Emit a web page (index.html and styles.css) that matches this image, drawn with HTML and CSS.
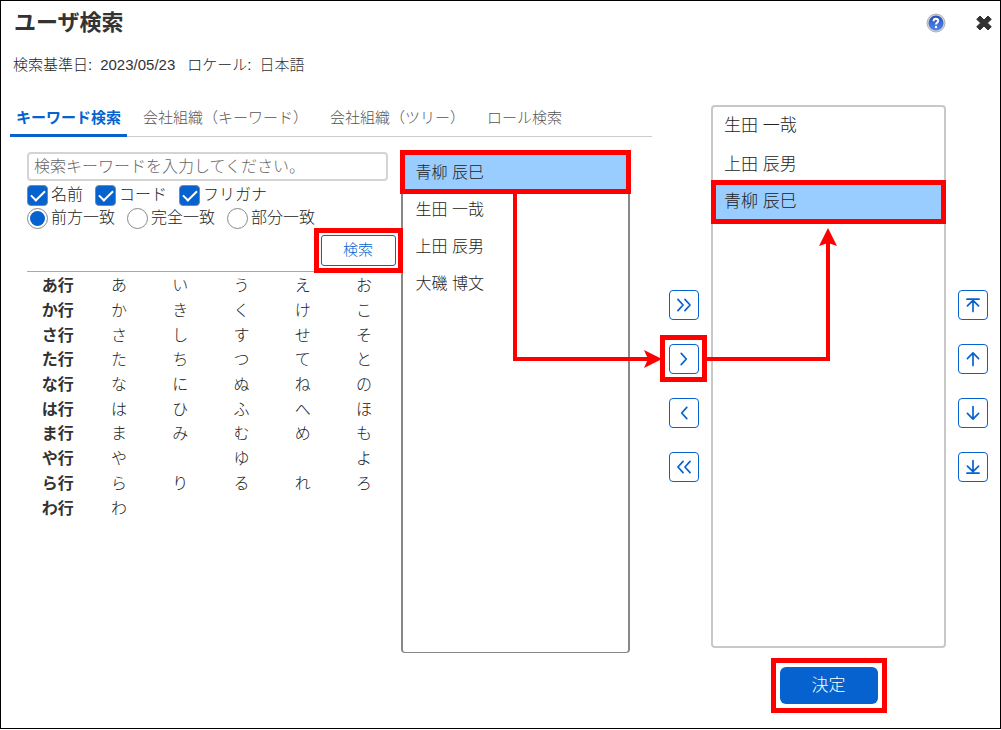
FILE: index.html
```html
<!DOCTYPE html>
<html lang="ja">
<head>
<meta charset="utf-8">
<meta name="viewport" content="width=device-width, initial-scale=1">
<title>ユーザ検索</title>
<link rel="stylesheet" href="styles.css">
</head>
<body>
<div class="dialog">
  <header class="header">
    <h1 class="title">ユーザ検索</h1>
    <div class="header-actions">
      <button class="icon-button" type="button" aria-label="ヘルプ">
        <svg width="20" height="20" viewBox="0 0 20 20">
          <defs><linearGradient id="orb" x1="0" y1="0" x2="0" y2="1"><stop offset="0" stop-color="#2a50bc"/><stop offset="1" stop-color="#4f86ee"/></linearGradient></defs>
          <circle cx="10" cy="10" r="9" fill="#d5d5d5" stroke="#b0b0b0"/>
          <circle cx="10" cy="10" r="7.5" fill="url(#orb)"/>
          <path d="M7.6 8.2C7.6 5 12.3 5.2 12.2 7.9C12.1 9.6 10 9.4 10 11.6" fill="none" stroke="#fff" stroke-width="2"/>
          <circle cx="10" cy="14" r="1.2" fill="#fff"/>
        </svg>
      </button>
      <button class="icon-button" type="button" aria-label="閉じる">
        <svg width="16" height="16" viewBox="0 0 16 16"><path d="M4 1L8 5L12 1L15.3 4.3L11.4 8L15.3 11.7L12 15L8 11L4 15L.7 11.7L4.6 8L.7 4.3Z" fill="#333" stroke="#333" stroke-width="1" stroke-linejoin="round"/></svg>
      </button>
    </div>
  </header>

  <dl class="meta">
    <div class="meta-item"><dt>検索基準日:</dt><dd>2023/05/23</dd></div>
    <div class="meta-item"><dt>ロケール:</dt><dd>日本語</dd></div>
  </dl>

  <main class="workspace">
    <section class="finder">
      <nav class="tabs">
        <a class="tab tab-active" href="#keyword">キーワード検索</a>
        <a class="tab" href="#org-keyword">会社組織（キーワード）</a>
        <a class="tab" href="#org-tree">会社組織（ツリー）</a>
        <a class="tab" href="#role">ロール検索</a>
      </nav>
      <div class="finder-body">
        <form class="search">
          <input class="keyword" type="text" placeholder="検索キーワードを入力してください。" aria-label="検索キーワード">
          <div class="choices">
            <label class="choice"><input class="check" type="checkbox" checked>名前</label>
            <label class="choice"><input class="check" type="checkbox" checked>コード</label>
            <label class="choice"><input class="check" type="checkbox" checked>フリガナ</label>
          </div>
          <div class="choices choices-radio">
            <label class="choice"><input class="radio" type="radio" name="match" checked>前方一致</label>
            <label class="choice"><input class="radio" type="radio" name="match">完全一致</label>
            <label class="choice"><input class="radio" type="radio" name="match">部分一致</label>
          </div>
          <div class="search-actions"><button class="search-button marked marked-tight" type="button">検索</button></div>
          <table class="kana">
            <tbody>
              <tr><th scope="row">あ行</th><td>あ</td><td>い</td><td>う</td><td>え</td><td>お</td></tr>
              <tr><th scope="row">か行</th><td>か</td><td>き</td><td>く</td><td>け</td><td>こ</td></tr>
              <tr><th scope="row">さ行</th><td>さ</td><td>し</td><td>す</td><td>せ</td><td>そ</td></tr>
              <tr><th scope="row">た行</th><td>た</td><td>ち</td><td>つ</td><td>て</td><td>と</td></tr>
              <tr><th scope="row">な行</th><td>な</td><td>に</td><td>ぬ</td><td>ね</td><td>の</td></tr>
              <tr><th scope="row">は行</th><td>は</td><td>ひ</td><td>ふ</td><td>へ</td><td>ほ</td></tr>
              <tr><th scope="row">ま行</th><td>ま</td><td>み</td><td>む</td><td>め</td><td>も</td></tr>
              <tr><th scope="row">や行</th><td>や</td><td></td><td>ゆ</td><td></td><td>よ</td></tr>
              <tr><th scope="row">ら行</th><td>ら</td><td>り</td><td>る</td><td>れ</td><td>ろ</td></tr>
              <tr><th scope="row">わ行</th><td>わ</td><td></td><td></td><td></td><td></td></tr>
            </tbody>
          </table>
        </form>
        <ul class="list candidates" role="listbox" aria-label="検索結果">
          <li class="item item-selected" role="option" aria-selected="true">青柳 辰巳</li>
          <li class="item" role="option">生田 一哉</li>
          <li class="item" role="option">上田 辰男</li>
          <li class="item" role="option">大磯 博文</li>
        </ul>
      </div>
    </section>

    <div class="controls">
      <button class="square" type="button" aria-label="すべて追加"><svg class="glyph" viewBox="0 0 30 30"><path d="M8.5 9L14 15L8.5 21M16 9L21.5 15L16 21"/></svg></button>
      <div class="step">
        <button class="square marked" type="button" aria-label="追加"><svg class="glyph" viewBox="0 0 30 30"><path d="M12 9L17.5 15L12 21"/></svg></button>
        <svg class="arrow arrow-in" width="149" height="178" viewBox="0 0 149 178" aria-hidden="true"><path d="M2 0V166H136" fill="none" stroke="#f00" stroke-width="4"/><path d="M149 166L131 157L135 166L131 175Z" fill="#f00"/></svg>
        <svg class="arrow arrow-out" width="132" height="134" viewBox="0 0 132 134" aria-hidden="true"><path d="M0 131H122V14" fill="none" stroke="#f00" stroke-width="4"/><path d="M122 0L113 18L122 15L131 18Z" fill="#f00"/></svg>
      </div>
      <button class="square" type="button" aria-label="戻す"><svg class="glyph" viewBox="0 0 30 30"><path d="M18 9L12.5 15L18 21"/></svg></button>
      <button class="square" type="button" aria-label="すべて戻す"><svg class="glyph" viewBox="0 0 30 30"><path d="M14 9L8.5 15L14 21M21.5 9L16 15L21.5 21"/></svg></button>
    </div>

    <ul class="list chosen" role="listbox" aria-label="選択済みユーザ">
      <li class="item" role="option">生田 一哉</li>
      <li class="item" role="option">上田 辰男</li>
      <li class="item item-selected" role="option" aria-selected="true">青柳 辰巳</li>
    </ul>

    <div class="controls">
      <button class="square" type="button" aria-label="先頭へ"><svg class="glyph" viewBox="0 0 30 30"><path d="M8.5 8.8H21.5M15 22V10.5M9 16L15 10L21 16"/></svg></button>
      <button class="square" type="button" aria-label="上へ"><svg class="glyph" viewBox="0 0 30 30"><path d="M15 22V9M9 14.5L15 8.5L21 14.5"/></svg></button>
      <button class="square" type="button" aria-label="下へ"><svg class="glyph" viewBox="0 0 30 30"><path d="M15 8V21M9 15.5L15 21.5L21 15.5"/></svg></button>
      <button class="square" type="button" aria-label="末尾へ"><svg class="glyph" viewBox="0 0 30 30"><path d="M15 8V19.5M9 14L15 20L21 14M8.5 21.5H21.5"/></svg></button>
    </div>

    <div class="confirm"><button class="confirm-button marked" type="button">決定</button></div>
  </main>
</div>
</body>
</html>
```
FILE: styles.css
```css
* { box-sizing: border-box; }

body {
  margin: 0;
  background: #fff;
  color: #222;
  font: 300 16px/24px "Liberation Sans", "Noto Sans CJK JP", sans-serif;
}

button, input { font: inherit; }

ul, dl, dd { margin: 0; padding: 0; list-style: none; }

.dialog {
  border: 1px solid #000;
  padding: 0 12px 24px 9px;
}

.header {
  display: flex;
  align-items: center;
  justify-content: space-between;
  padding: 5px 0 0 4px;
}

.title { margin: 0; color: #333; font-size: 22px; line-height: 34px; font-weight: 700; }

.header-actions { display: flex; align-items: center; gap: 30px; margin-right: -4px; }

.icon-button {
  display: flex;
  padding: 0;
  border: 0;
  background: none;
}

.meta { display: flex; gap: 12px; padding: 13px 0 0 3px; font-size: 15px; }
.meta-item { display: flex; gap: 8px; }
.meta dd { color: #333; }

.workspace {
  display: grid;
  grid-template-columns: minmax(0, 647fr) 30px minmax(0, 235fr) 30px;
  column-gap: 12px;
  padding-top: 28px;
}

.finder { padding-right: 5px; }

.tabs {
  display: flex;
  gap: 10px;
  border-bottom: 1px solid #ccc;
  font-size: 15px;
}

.tab {
  margin-bottom: -1px;
  padding: 1px 6px 4px;
  border-bottom: 3px solid transparent;
  color: #555;
  text-decoration: none;
  white-space: nowrap;
}

.tab-active { border-color: #0562ce; color: #0562ce; font-weight: 700; }

.finder-body {
  display: grid;
  grid-template-columns: minmax(0, 373fr) minmax(0, 229fr);
  padding: 15px 22px 0 17px;
}

.keyword {
  display: block;
  width: calc(100% - 13px);
  height: 29px;
  padding: 0 5px;
  border: 2px solid #d4d4d4;
  border-radius: 4px;
  color: #333;
}

.keyword::placeholder { color: #666; }

.choices { display: flex; gap: 12px; padding-top: 2px; }
.choices-radio { padding-top: 0; line-height: 22px; }
.choice { display: flex; align-items: center; gap: 3px; }

.check, .radio {
  flex: none;
  appearance: none;
  width: 21px;
  height: 21px;
  margin: 0;
  border: 1px solid #888;
}

.check { display: grid; place-items: center; border-radius: 4px; }
.check:checked { background: #0562ce; }

.check:checked::after {
  content: "";
  width: 12px;
  height: 6px;
  margin-bottom: 3px;
  border: solid #fff;
  border-width: 0 0 2px 2px;
  rotate: -45deg;
}

.radio { border-radius: 50%; }
.radio:checked { padding: 2px; background: #0562ce content-box; }

.search-actions { display: flex; justify-content: flex-end; padding: 6px 5px 5px 0; }

.search-button {
  width: 75px;
  height: 31px;
  padding: 0 0 2px;
  border: 1px solid #0562ce;
  border-radius: 3px;
  background: #fff;
  color: #0562ce;
  font-size: 15px;
}

/* Red frame drawn around the control used in each step */
.marked { position: relative; }

.marked::after {
  content: "";
  position: absolute;
  inset: -9px;
  border: 5px solid #f00;
  pointer-events: none;
}

.square.marked::after { inset: -10px -9px -9px -10px; }
.marked-tight::after { inset: -8px; }

.kana {
  width: 100%;
  height: 250px;
  padding: 2px 6px 0 0;
  border-top: 1px solid #aaa;
  border-spacing: 0;
  table-layout: fixed;
  text-align: center;
}

.kana th, .kana td { padding: 0; line-height: 24px; }
.kana th { color: #333; font-weight: 700; }

.candidates {
  min-height: 501px;
  border: solid #888;
  border-width: 1px 2px;
  border-radius: 4px;
  padding-top: 2px;
}

.candidates .item { padding: 7px 13px 6px; }

.chosen {
  margin-bottom: 5px;
  border: 2px solid #c8c8c8;
  border-radius: 4px;
  font-size: 17px;
}

.chosen .item { padding: 7px 11px 8px; }

.item.item-selected {
  outline: 5px solid #f00;
  background: #9cf;
}

.candidates .item-selected { margin: 0 2px 2px; padding: 6px 11px 4px; }
.chosen .item-selected { margin: 0 3px; padding: 5px 8px; }

.controls {
  display: flex;
  flex-direction: column;
  justify-content: center;
  gap: 24px;
  padding-top: 14px;
}

.square {
  display: block;
  width: 30px;
  height: 30px;
  padding: 0;
  border: 1px solid #0562ce;
  border-radius: 4px;
  background: #fff;
}

.glyph {
  display: block;
  width: 28px;
  height: 28px;
  fill: none;
  stroke: #0562ce;
  stroke-width: 1.8;
  stroke-linecap: round;
  stroke-linejoin: round;
}

.step { position: relative; }
.arrow { position: absolute; pointer-events: none; }
.arrow-in { right: 37px; top: -151px; }
.arrow-out { left: 37px; top: -116px; }

.confirm { grid-column: 3; display: flex; justify-content: center; padding-top: 14px; }

.confirm-button {
  width: 98px;
  height: 37px;
  padding: 0;
  border: 0;
  border-radius: 6px;
  background: #0562ce;
  color: #fff;
  font-size: 17px;
}
```
